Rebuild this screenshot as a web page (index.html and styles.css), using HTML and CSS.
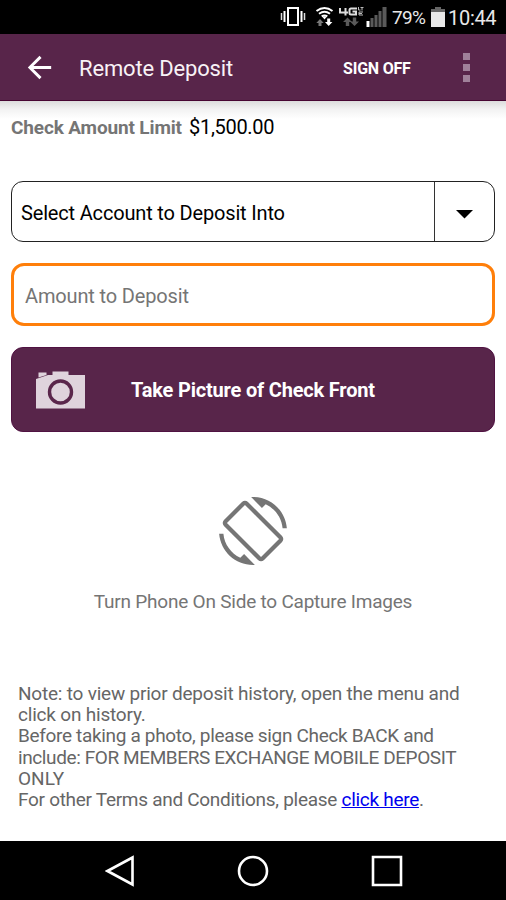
FILE: index.html
```html
<!DOCTYPE html>
<html lang="en">
<head>
<meta charset="utf-8">
<title>Remote Deposit</title>
<link rel="stylesheet" href="styles.css">
</head>
<body>
<div class="screen">
  <div class="status">
    <svg class="status-icons" width="108" height="34" viewBox="280 0 108 34">
      <rect x="288" y="8" width="10" height="17" fill="none" stroke="#fff" stroke-width="2"/>
      <path d="M284.500 11v11M301.500 11v11" stroke="#fff" stroke-width="2"/>
      <path d="M281.500 13v7M304.500 13v7" stroke="#ddd" stroke-width="1.500"/>
      <g fill="none" stroke="#fff" stroke-width="2">
        <path d="M316.500 11Q324.500 5 332.500 11M319 13.800Q324.500 9.800 330 13.800M321.700 16.400Q324.500 14.400 327.300 16.400"/>
      </g>
      <path d="M324.500 19.500l-2-2.500q2-1.500 4 0z" fill="#fff"/>
      <path d="M320 19l3.700 4h-2.200v3h-3v-3h-2.200z" fill="#777"/>
      <path d="M328.700 26l3.700-4h-2.200v-3.500h-3v3.500h-2.200z" fill="#fff"/>
      <path d="M340 8v4.500h8M345.500 8v7.500M357 8.500h-6q-1.500 0-1.500 1.500v3q0 1.500 1.500 1.500h5v-3h-3.500" fill="none" stroke="#ddd" stroke-width="2"/>
      <path d="M358.500 7v3h2M360.500 7.500h3M362 7.500v3M363 12h-4v3h4M359 13.500h3" fill="none" stroke="#bbb" stroke-width="1"/>
      <path d="M347.500 17.500l4.500 4.500h-2.800v4h-3.400v-4h-2.800z" fill="#5a5a5a"/>
      <path d="M354.500 26l4.500-4.500h-2.800v-4h-3.400v4h-2.800z" fill="#5a5a5a"/>
      <path d="M366.500 21h3v6h-3z" fill="#fff"/>
      <path d="M370.500 18h3v9h-3zM374.500 15h3v12h-3zM378.500 11h3v16h-3zM382.500 7h4v20h-4z" fill="#5a5a5a"/>
    </svg>
    <span class="battery-text">79%</span>
    <svg class="battery" width="14" height="20" viewBox="0 0 14 20"><path d="M4 0h6v2h4v4H0V2h4z" fill="#666"/><path d="M0 5h14v15H0z" fill="#e8e8e8"/></svg>
    <span class="clock">10:44</span>
  </div>
  <header class="bar">
    <svg class="back" width="35" height="35" viewBox="0 0 24 24"><path fill="#fff" d="M20 11H7.830l5.590-5.590L12 4l-8 8 8 8 1.410-1.410L7.830 13H20v-2z"/></svg>
    <h1 class="title">Remote Deposit</h1>
    <span class="signoff">SIGN OFF</span>
    <div class="more"><i></i><i></i><i></i></div>
  </header>
  <main class="content">
    <div class="limit"><b class="limit-label">Check Amount Limit</b><span class="limit-value">$1,500.00</span></div>
    <div class="select">
      <span class="select-text">Select Account to Deposit Into</span>
      <span class="select-arrow"><svg width="17" height="9" viewBox="0 0 17 9"><path d="M0 0h17L8.500 8.500z"/></svg></span>
    </div>
    <div class="amount"><span class="amount-text">Amount to Deposit</span></div>
    <div class="take">
      <svg class="camera" width="49" height="38" viewBox="0 0 49 38">
        <path fill="#dfd3dc" d="M2.500 1.500h8v2.500l-8 2.500zM0 8l12-4h4.500V.5h16V4H49v33.500H0z"/>
        <circle cx="24.500" cy="21" r="11" fill="none" stroke="#5a264b" stroke-width="3.400"/>
      </svg>
      <b class="take-text">Take Picture of Check Front</b>
    </div>
    <div class="rotate">
      <svg width="68" height="68" viewBox="0 0 24 24"><path fill="#757575" d="M16.480 2.520c3.270 1.550 5.610 4.720 5.970 8.480h1.500C23.440 4.840 18.290 0 12 0l-.66.03 3.810 3.810 1.330-1.320zm-6.250-.77c-.59-.59-1.540-.59-2.120 0L1.750 8.110c-.59.59-.59 1.540 0 2.120l12.020 12.020c.59.59 1.540.59 2.120 0l6.360-6.360c.59-.59.59-1.540 0-2.120L10.230 1.750zm4.600 19.440L2.810 9.170l6.360-6.360 12.020 12.020-6.360 6.360zm-7.310.29C4.250 19.940 1.910 16.760 1.550 13H.05C.56 19.160 5.710 24 12 24l.66-.03-3.810-3.810-1.330 1.320z"/></svg>
      <span class="rotate-text">Turn Phone On Side to Capture Images</span>
    </div>
    <div class="note">
      <span class="n1">Note: to view prior deposit history, open the menu and</span><br>
      <span class="n2">click on history.</span><br>
      <span class="n3">Before taking a photo, please sign Check BACK and</span><br>
      <span class="n4">include: FOR MEMBERS EXCHANGE MOBILE DEPOSIT</span><br>
      <span class="n5">ONLY</span><br>
      <span class="n6">For other Terms and Conditions, please <a href="#">click here</a>.</span>
    </div>
  </main>
  <nav class="nav">
    <svg width="30" height="32" viewBox="0 0 30 32"><path d="M27.500 2.500v27L2.500 16z"/></svg>
    <svg width="32" height="32" viewBox="0 0 32 32"><circle cx="16" cy="16" r="14"/></svg>
    <svg width="32" height="32" viewBox="0 0 32 32"><path d="M2 2h28v28H2z"/></svg>
  </nav>
</div>
</body>
</html>
```

FILE: styles.css
```css
* { box-sizing: border-box; }
body { margin: 0; background: #fff; font-family: Roboto, "Liberation Sans", sans-serif; font-size: 19px; color: #000; }
.screen { width: 506px; height: 900px; display: flex; flex-direction: column; overflow: hidden; white-space: nowrap; }
.status { height: 34px; flex: none; background: #000; color: #e8e8e8; display: flex; align-items: center; padding-left: 280px; line-height: 34px; }
.status-icons { flex: none; }
.battery-text { width: 43px; margin-left: 4px; font-size: 19px; letter-spacing: -0.7px; padding-top: 1px; }
.battery { flex: none; margin-left: -4px; }
.clock { font-size: 20px; margin-left: 3px; padding-top: 1px; letter-spacing: -0.3px; }
.bar { height: 67px; flex: none; background: #58254a; border-bottom: 1px solid #470633; color: #fff; display: flex; align-items: center; padding-left: 22px; }
.title { margin: 0 0 0 22px; width: 264px; font-size: 22px; font-weight: 400; letter-spacing: -0.17px; color: #f8f2f6; padding-top: 2px; }
.signoff { font-size: 16px; font-weight: 700; letter-spacing: -0.2px; width: 120px; padding-top: 2px; }
.more { display: flex; flex-direction: column; gap: 4px; padding-top: 1px; }
.more i { width: 7px; height: 7px; background: #a0819a; }
.content { flex: 1; padding: 0 11px; background: linear-gradient(#dcdcdc, #f2f2f2 8px, #fff 18px); }
.limit { height: 80px; padding-top: 14px; line-height: 25px; display: flex; }
.limit-label { color: #757575; width: 178px; letter-spacing: -0.14px; }
.limit-value { font-size: 20px; letter-spacing: -0.3px; }
.select { height: 61px; border: 1px solid #222; border-radius: 12px; background: #fff; display: flex; align-items: stretch; }
.select-text { width: 423px; padding-left: 9px; font-size: 20px; letter-spacing: -0.17px; line-height: 62px; height: 59px; border-right: 1px solid #333; }
.select-arrow { flex: 1; display: flex; align-items: center; justify-content: center; padding-top: 5px; }
.amount { height: 63px; margin-top: 21px; border: 3px solid #ff7f0a; border-radius: 13px; padding-left: 11px; font-size: 20px; letter-spacing: -0.15px; line-height: 60px; color: #757575; }
.take { height: 85px; margin-top: 21px; border: 1px solid #501242; border-radius: 12px; background: #58254a; display: flex; align-items: center; padding-left: 24px; color: #fff; }
.take-text { margin-left: 46px; padding-top: 1px; font-size: 20px; letter-spacing: -0.19px; }
.rotate { display: flex; flex-direction: column; align-items: center; margin-top: 65px; color: #757575; }
.rotate-text { line-height: 24px; margin-top: 25px; letter-spacing: -0.22px; }
.note { margin: 69px 0 0 7px; line-height: 21.2px; color: #666; }
.n1 { letter-spacing: -0.21px; }
.n2 { letter-spacing: -0.2px; }
.n3 { letter-spacing: -0.33px; }
.n4 { letter-spacing: -0.4px; }
.n6 { letter-spacing: -0.29px; }
.note a { color: #00e; }
.nav { height: 59px; flex: none; background: #000; display: flex; align-items: center; padding: 0 103px 0 105px; justify-content: space-between; }
.nav svg { fill: none; stroke: #fff; stroke-width: 2.6; }
```
